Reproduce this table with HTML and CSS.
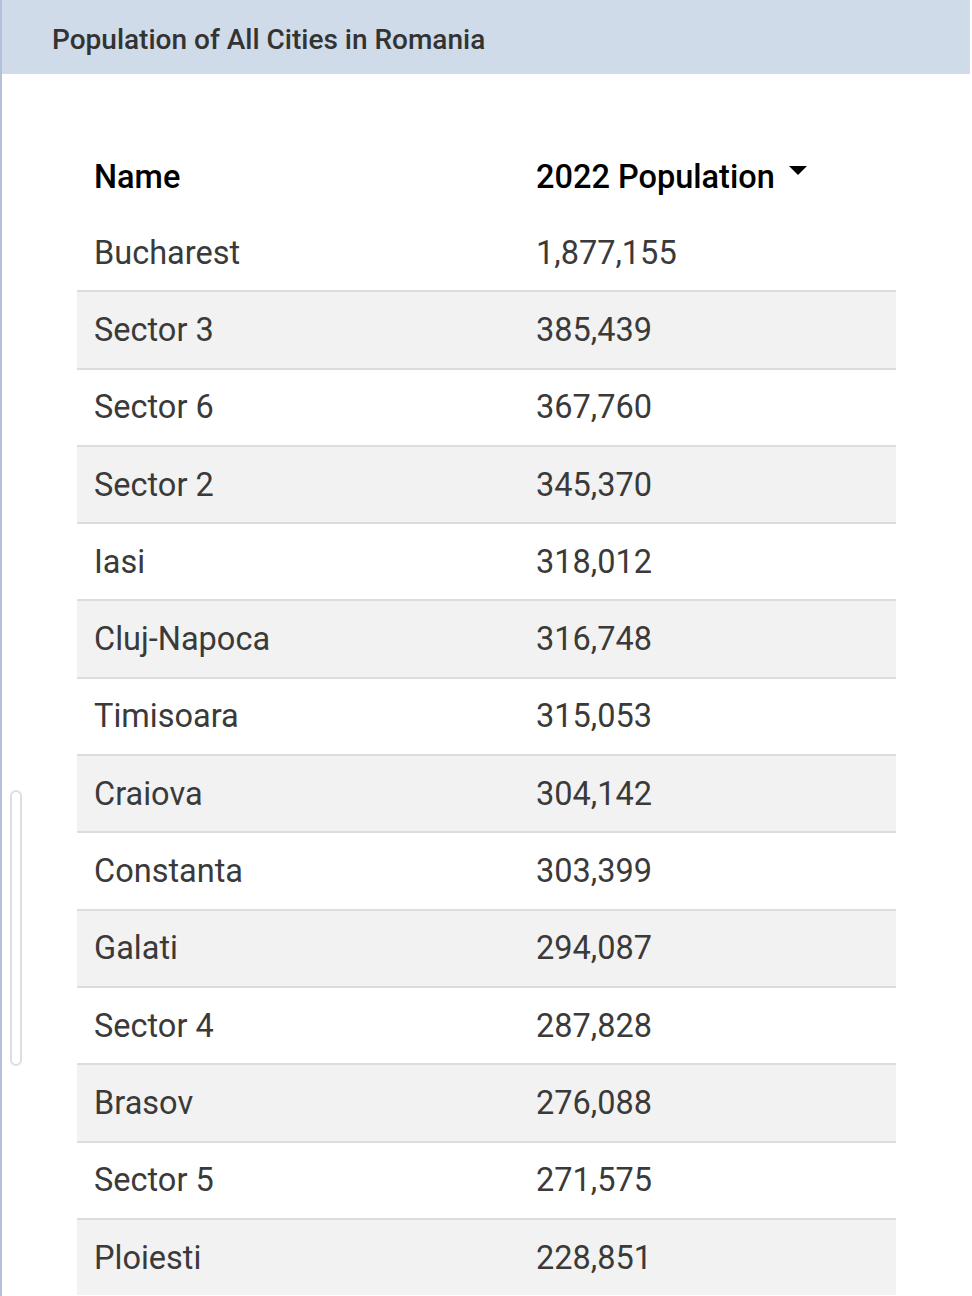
FILE: index.html
```html
<!DOCTYPE html>
<html>
<head>
<meta charset="utf-8">
<link rel="stylesheet" href="styles.css">
</head>
<body>
<div class="page">
  <div class="title-bar"><h1 class="title">Population of All Cities in Romania</h1></div>
  <div class="content">
    <table class="pop-table">
      <colgroup><col class="c-name"><col class="c-pop"></colgroup>
      <thead>
        <tr><th>Name</th><th>2022 Population <span class="sort-caret"></span></th></tr>
      </thead>
      <tbody>
        <tr><td>Bucharest</td><td>1,877,155</td></tr>
        <tr><td>Sector 3</td><td>385,439</td></tr>
        <tr><td>Sector 6</td><td>367,760</td></tr>
        <tr><td>Sector 2</td><td>345,370</td></tr>
        <tr><td>Iasi</td><td>318,012</td></tr>
        <tr><td>Cluj-Napoca</td><td>316,748</td></tr>
        <tr><td>Timisoara</td><td>315,053</td></tr>
        <tr><td>Craiova</td><td>304,142</td></tr>
        <tr><td>Constanta</td><td>303,399</td></tr>
        <tr><td>Galati</td><td>294,087</td></tr>
        <tr><td>Sector 4</td><td>287,828</td></tr>
        <tr><td>Brasov</td><td>276,088</td></tr>
        <tr><td>Sector 5</td><td>271,575</td></tr>
        <tr><td>Ploiesti</td><td>228,851</td></tr>
      </tbody>
    </table>
  </div>
  <div class="scroll-thumb"></div>
</div>
</body>
</html>
```
FILE: styles.css
```css
html, body {
  margin: 0;
  padding: 0;
  background: #ffffff;
}
body {
  font-family: Roboto, "Liberation Sans", sans-serif;
  width: 972px;
  height: 1296px;
  overflow: hidden;
}
.page {
  position: relative;
  margin-right: 2px;
  border-left: 2px solid #b3c2d8;
  height: 1296px;
  box-sizing: border-box;
}
.title-bar {
  background: #cfdbe8;
  height: 74px;
  display: flex;
  align-items: center;
  padding-left: 50px;
  padding-top: 4px;
  box-sizing: border-box;
}
.title {
  margin: 0;
  font-size: 28px;
  font-weight: 500;
  color: #333333;
}
.content {
  padding: 65px 0 0 75px;
}
.pop-table {
  width: 819px;
  table-layout: fixed;
  border-collapse: collapse;
  font-size: 32.5px;
}
.c-name { width: 442px; }
.c-pop { width: 377px; }
.pop-table th {
  text-align: left;
  font-weight: 500;
  color: #000;
  height: 76px;
  padding: 0 0 0 17px;
  white-space: nowrap;
}
.sort-caret {
  display: inline-block;
  width: 0;
  height: 0;
  border-left: 9.5px solid transparent;
  border-right: 9.5px solid transparent;
  border-top: 9px solid #000;
  vertical-align: middle;
  margin-left: 6px;
  position: relative;
  top: -9px;
}
.pop-table td {
  padding: 0 0 0 17px;
  height: 75.3px;
  color: #3a3a3a;
  font-weight: 400;
}
.pop-table tbody tr + tr td {
  border-top: 2px solid #dcdcdc;
}
.pop-table tbody tr:nth-child(even) td {
  background: #f2f2f2;
}
.scroll-thumb {
  position: absolute;
  left: 8px;
  top: 790px;
  width: 8px;
  height: 272px;
  border: 2px solid #dedede;
  border-radius: 6px;
}
```
